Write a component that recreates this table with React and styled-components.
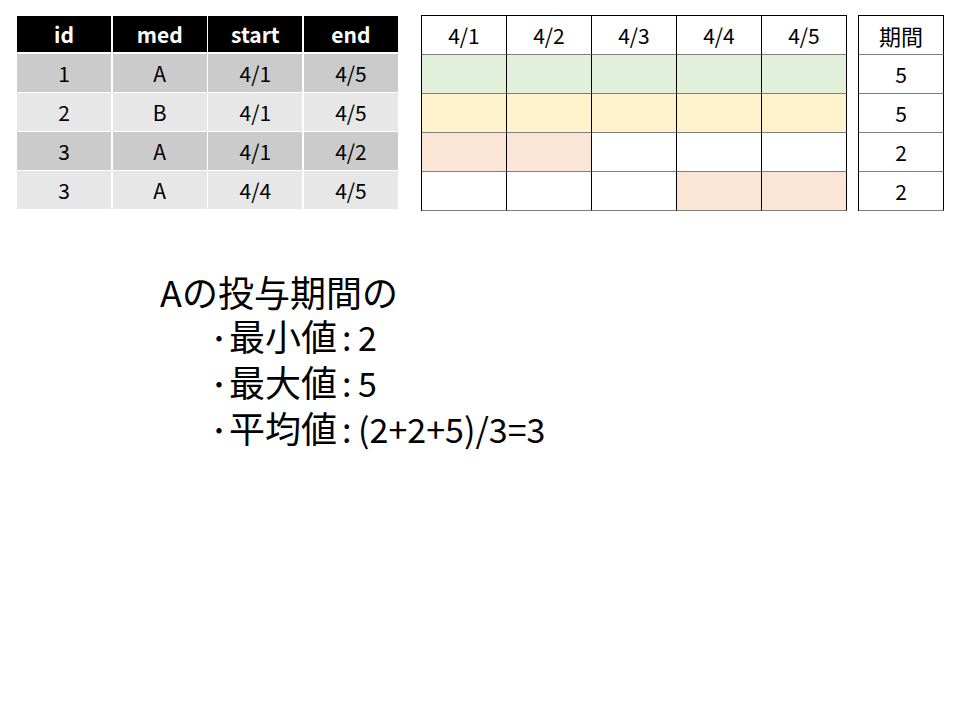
import React from "react";
import styled, { createGlobalStyle } from "styled-components";

const GlobalStyle = createGlobalStyle`
  body {
    margin: 0;
    background: #ffffff;
    font-family: "Noto Sans CJK JP", "Noto Sans", sans-serif;
    color: #000;
  }
`;

const records = [
  { id: 1, med: "A", start: "4/1", end: "4/5" },
  { id: 2, med: "B", start: "4/1", end: "4/5" },
  { id: 3, med: "A", start: "4/1", end: "4/2" },
  { id: 3, med: "A", start: "4/4", end: "4/5" },
];

const days = ["4/1", "4/2", "4/3", "4/4", "4/5"];

// which days each row covers, and its colour
const spans = [
  { fill: "#e2efda", on: [1, 1, 1, 1, 1], len: 5 },
  { fill: "#fff2cc", on: [1, 1, 1, 1, 1], len: 5 },
  { fill: "#fbe5d6", on: [1, 1, 0, 0, 0], len: 2 },
  { fill: "#fbe5d6", on: [0, 0, 0, 1, 1], len: 2 },
];

const stats = [
  { label: "最小値", value: "2" },
  { label: "最大値", value: "5" },
  { label: "平均値", value: "(2+2+5)/3=3" },
];

function App() {
  return (
    <Page>
      <GlobalStyle />
      <TopRow>
        <DataTable>
          {["id", "med", "start", "end"].map((h) => (
            <HeadCell key={h}>{h}</HeadCell>
          ))}
          {records.map((r, i) =>
            [r.id, r.med, r.start, r.end].map((v, j) => (
              <DataCell key={i + "-" + j} $dark={i % 2 === 0}>
                {v}
              </DataCell>
            ))
          )}
        </DataTable>

        <DateGrid>
          {days.map((d) => (
            <GridCell key={d}>{d}</GridCell>
          ))}
          {spans.map((s, i) =>
            s.on.map((on, j) => (
              <GridCell key={i + "-" + j} $fill={on ? s.fill : null} />
            ))
          )}
        </DateGrid>

        <LengthGrid>
          <GridCell $cjk>期間</GridCell>
          {spans.map((s, i) => (
            <GridCell key={i}>{s.len}</GridCell>
          ))}
        </LengthGrid>
      </TopRow>

      <Summary>
        <Line>Aの投与期間の</Line>
        {stats.map((s) => (
          <Item key={s.label}>
            <Dot>･</Dot>
            <span>{s.label}</span>
            <Value>: {s.value}</Value>
          </Item>
        ))}
      </Summary>
    </Page>
  );
}

const Page = styled.div`
  width: 960px;
  height: 720px;
  padding: 15px 0 0 17px;
  box-sizing: border-box;
`;

const TopRow = styled.div`
  display: flex;
  align-items: flex-start;
`;

const DataTable = styled.div`
  display: grid;
  grid-template-columns: repeat(4, 1fr);
  grid-template-rows: 37px repeat(4, 38px);
  column-gap: 1.5px;
  row-gap: 1px;
  width: 381px;
  margin-top: 1px;

  & > :nth-child(-n + 4) {
    margin-bottom: 1px;
  }
`;

const HeadCell = styled.div`
  display: flex;
  align-items: center;
  justify-content: center;
  background: #000;
  color: #fff;
  font-weight: bold;
  font-size: 21px;
`;

const DataCell = styled.div`
  display: flex;
  align-items: center;
  justify-content: center;
  background: ${(p) => (p.$dark ? "#cbcbcb" : "#e7e7e7")};
  font-size: 21px;
`;

const DateGrid = styled.div`
  display: grid;
  grid-template-columns: repeat(5, 85px);
  grid-auto-rows: 39px;
  margin-left: 23px;
  border-top: 1px solid #000;
  border-left: 1px solid #000;
`;

const LengthGrid = styled(DateGrid)`
  grid-template-columns: 85px;
  margin-left: 11px;
`;

const GridCell = styled.div`
  display: flex;
  align-items: center;
  justify-content: center;
  box-sizing: border-box;
  background: ${(p) => p.$fill || "#fff"};
  border-right: 1px solid #000;
  border-bottom: 1.5px solid #7f7f7f;
  font-size: ${(p) => (p.$cjk ? "22px" : "21px")};
`;

const Summary = styled.div`
  margin: 58px 0 0 143px;
  font-size: 36px;
  line-height: 44px;
`;

const Line = styled.div``;

const Item = styled.div`
  display: flex;
  align-items: baseline;
  padding-left: 51px;
`;

const Dot = styled.span`
  font-size: 32px;
  margin-right: 2px;
`;

const Value = styled.span`
  margin-left: 5px;
  font-size: 34px;
  word-spacing: -1px;
`;

export default App;
